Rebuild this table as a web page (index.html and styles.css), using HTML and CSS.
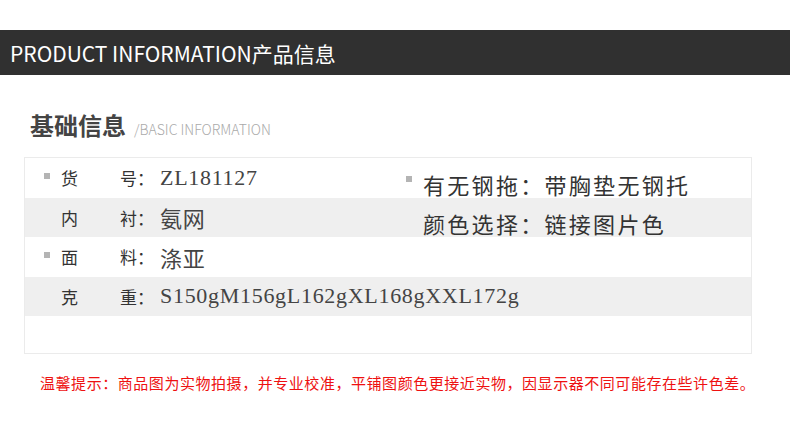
FILE: index.html
```html
<!DOCTYPE html>
<html lang="zh-CN">
	<head>
		<meta charset="UTF-8" />
		<meta name="viewport" content="width=device-width, initial-scale=1.0" />
		<title>产品信息</title>
		<link rel="stylesheet" href="styles.css">
	</head>
	<body>
		<header class="bar">
			<h1>PRODUCT INFORMATION产品信息</h1>
		</header>

		<main class="basic">
			<h2>基础信息<span>/BASIC INFORMATION</span></h2>

			<div class="table">
				<div class="row">
					<div class="cell left">
						<i class="dot"></i>
						<span class="key"><b>货</b><b>号：</b></span>
						<span class="val">ZL181127</span>
					</div>
					<div class="cell right"><i class="dot"></i>有无钢拖：带胸垫无钢托</div>
				</div>
				<div class="row gray">
					<div class="cell left">
						<i class="dot none"></i>
						<span class="key"><b>内</b><b>衬：</b></span>
						<span class="val">氨网</span>
					</div>
					<div class="cell right"><i class="dot none"></i>颜色选择：链接图片色</div>
				</div>
				<div class="row">
					<div class="cell left">
						<i class="dot"></i>
						<span class="key"><b>面</b><b>料：</b></span>
						<span class="val">涤亚</span>
					</div>
				</div>
				<div class="row gray">
					<div class="cell left wide">
						<i class="dot none"></i>
						<span class="key"><b>克</b><b>重：</b></span>
						<span class="val">S150gM156gL162gXL168gXXL172g</span>
					</div>
				</div>
			</div>

			<p class="tip">温馨提示：商品图为实物拍摄，并专业校准，平铺图颜色更接近实物，因显示器不同可能存在些许色差。</p>
		</main>
	</body>
</html>
```

FILE: styles.css
```css
* {
	padding: 0;
	margin: 0;
	box-sizing: border-box;
}
body {
	background: #fff;
	font-family: "Noto Sans CJK SC", "Noto Sans", sans-serif;
	color: #333;
}

.bar {
	margin-top: 30px;
	height: 45px;
	background-color: #303030;
	display: flex;
	align-items: center;
	padding-left: 10px;
}
.bar h1 {
	font-size: 21px;
	font-weight: 400;
	color: #fff;
}

.basic {
	padding: 0 38px 0 24px;
}
.basic h2 {
	margin: 35px 0 17px 6px;
	height: 30px;
	line-height: 30px;
	font-size: 24px;
	font-weight: 700;
	color: #444;
	display: flex;
	align-items: baseline;
}
.basic h2 span {
	margin-left: 8px;
	font-size: 14px;
	font-weight: 300;
	color: #aaa;
}

.table {
	border: 1px solid #ebebeb;
	padding-bottom: 37px;
}
.row {
	height: 39.5px;
	display: flex;
	align-items: center;
}
.row.gray {
	background-color: #efefef;
}

.cell {
	display: flex;
	align-items: center;
}
.left {
	width: 375px;
	padding-left: 19px;
}
.left.wide {
	width: auto;
}
.right {
	padding: 12px 0 0 6px;
	font-size: 22px;
	letter-spacing: 2.3px;
	color: #333;
}

.dot {
	display: inline-block;
	width: 6px;
	height: 6px;
	background-color: #b4b4b4;
	margin-right: 11px;
	flex-shrink: 0;
}
.left .dot {
	margin-top: -3px;
}
.right .dot {
	margin-top: -10px;
}
.dot.none {
	background-color: transparent;
}

.key {
	width: 93px;
	display: flex;
	justify-content: space-between;
	font-size: 17px;
	color: #333;
}
.key b {
	font-weight: 400;
}
.val {
	margin-left: 6px;
	font-family: "Liberation Serif", "Noto Sans CJK SC", serif;
	font-size: 22px;
	letter-spacing: 0.7px;
	color: #444;
}

.tip {
	margin: 19px 0 0 16px;
	line-height: 20px;
	font-size: 15px;
	letter-spacing: 0.55px;
	color: #ee1111;
	white-space: nowrap;
}
```
